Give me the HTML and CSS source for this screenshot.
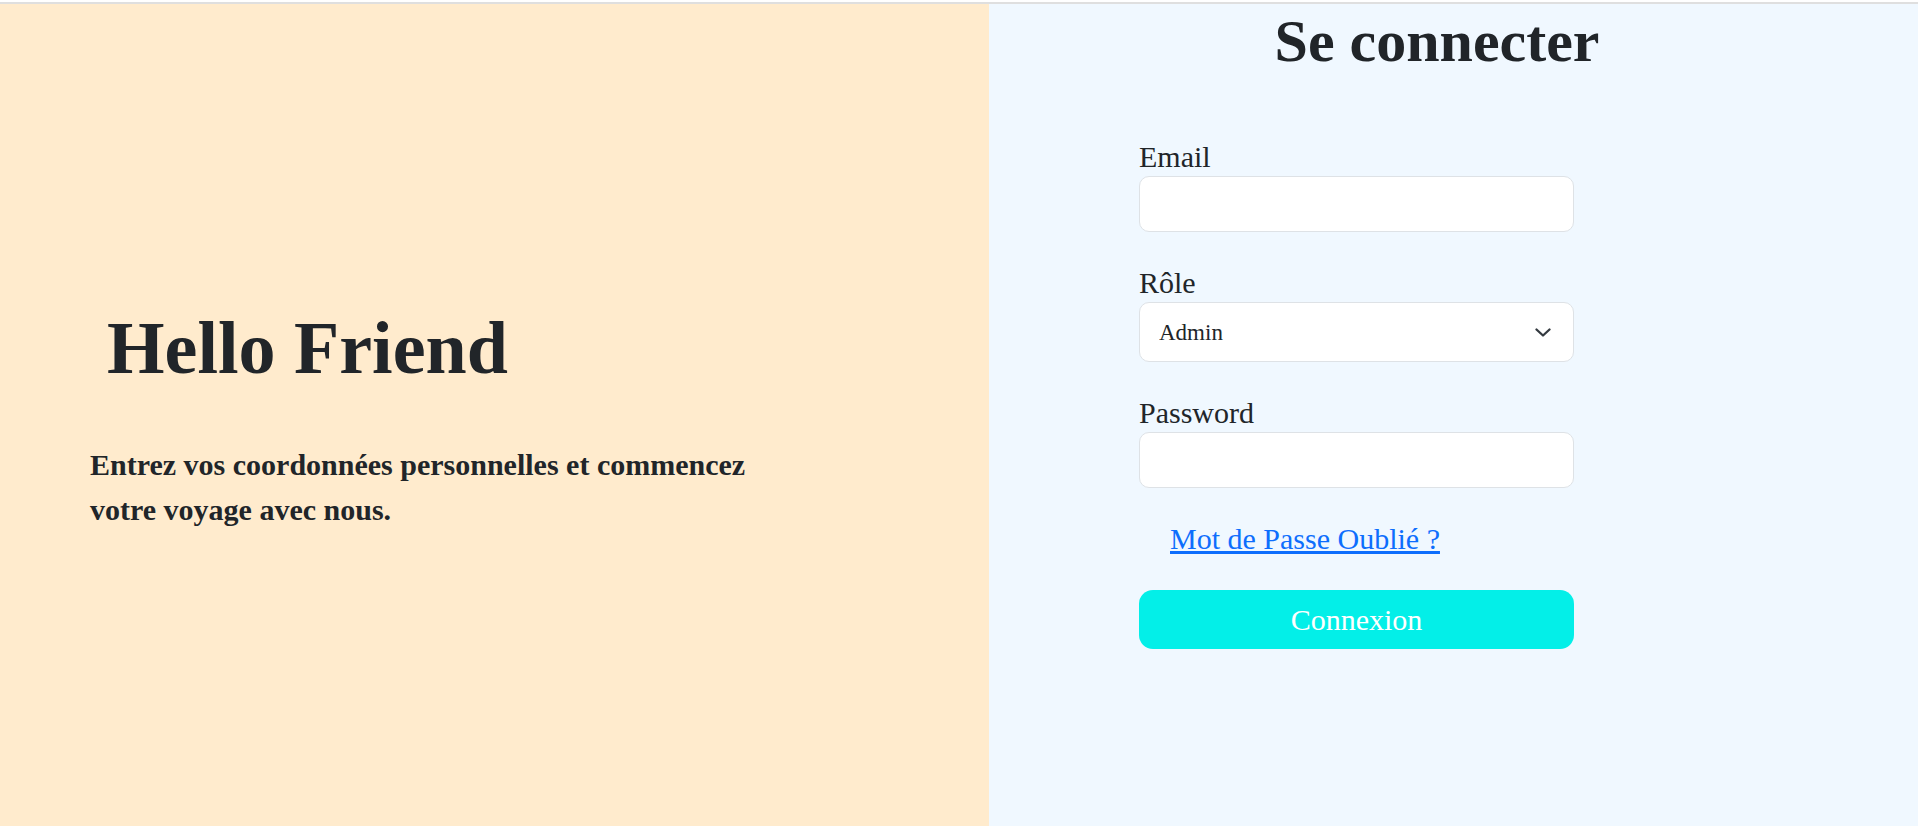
FILE: index.html
```html
<!DOCTYPE html>
<html lang="fr">
<head>
<meta charset="utf-8">
<title>Se connecter</title>
<link rel="stylesheet" href="styles.css">
</head>
<body>
<div class="topline"></div>
<main class="page">
  <section class="hello">
    <h1 class="hello-title">Hello Friend</h1>
    <p class="hello-text">Entrez vos coordonnées personnelles et commencez votre voyage avec nous.</p>
  </section>
  <section class="login">
    <h1 class="login-title">Se connecter</h1>
    <form class="login-form">
      <div class="field">
        <label class="field-label" for="email">Email</label>
        <input class="field-input" id="email" type="email">
      </div>
      <div class="field">
        <label class="field-label" for="role">Rôle</label>
        <div class="select-wrap">
          <select class="field-input field-select" id="role">
            <option>Admin</option>
            <option>Utilisateur</option>
          </select>
          <svg class="select-chevron" viewBox="0 0 16 9" width="16" height="9" aria-hidden="true">
            <polyline points="1.5,1.5 8,7.5 14.5,1.5" fill="none" stroke="#343a40" stroke-width="2.3" stroke-linecap="round" stroke-linejoin="round"/>
          </svg>
        </div>
      </div>
      <div class="field">
        <label class="field-label" for="password">Password</label>
        <input class="field-input" id="password" type="password">
      </div>
      <div class="forgot-row"><a class="forgot" href="#">Mot de Passe Oublié ?</a></div>
      <button class="submit" type="button">Connexion</button>
    </form>
  </section>
</main>
</body>
</html>
```
FILE: styles.css
```css
html, body {
  margin: 0;
  padding: 0;
  background: #ffffff;
}

body {
  font-family: "Liberation Serif", "Times New Roman", serif;
  color: #212529;
  overflow: hidden;
}

.topline {
  height: 2px;
  margin-top: 2px;
  background: #dfdfdf;
}

.page {
  display: flex;
  height: 822px;
}

.hello {
  width: 989px;
  box-sizing: border-box;
  background: #ffebcd;
  display: flex;
  flex-direction: column;
  justify-content: center;
  padding-left: 90px;
  padding-top: 4px;
}

.hello-title {
  margin: 0 0 49px;
  padding-left: 17px;
  font-size: 74px;
  line-height: 90px;
  font-weight: 700;
}

.hello-text {
  margin: 0;
  width: 700px;
  font-size: 30px;
  line-height: 45px;
  font-weight: 700;
}

.login {
  flex: 1;
  background: #f0f8ff;
}

.login-title {
  margin: 1px 0 62px;
  padding-right: 33px;
  text-align: center;
  font-size: 60px;
  line-height: 72px;
  font-weight: 700;
}

.login-form {
  margin-left: 150px;
  width: 435px;
}

.field {
  margin-bottom: 33px;
}

.field-label {
  display: block;
  margin-bottom: 1px;
  font-size: 30px;
  line-height: 36px;
}

.field-input {
  display: block;
  width: 100%;
  height: 56px;
  box-sizing: border-box;
  margin: 0;
  padding: 0 20px;
  border: 1px solid #dee2e6;
  border-radius: 10px;
  background: #ffffff;
  font-family: inherit;
  font-size: 23px;
  color: #212529;
  outline: none;
}

.select-wrap {
  position: relative;
}

.field-select {
  height: 60px;
  padding-left: 19px;
  -webkit-appearance: none;
  appearance: none;
}

.select-chevron {
  position: absolute;
  right: 23px;
  top: 26px;
  pointer-events: none;
}

.forgot-row {
  margin-left: 31px;
  margin-bottom: 33px;
  font-size: 30px;
  line-height: 36px;
}

.forgot {
  color: #0d6efd;
  text-decoration: underline;
}

.submit {
  display: block;
  width: 100%;
  height: 59px;
  margin: 0;
  border: 0;
  border-radius: 14px;
  background: #03efe8;
  color: #ffffff;
  font-family: inherit;
  font-size: 30px;
  cursor: pointer;
}
```
